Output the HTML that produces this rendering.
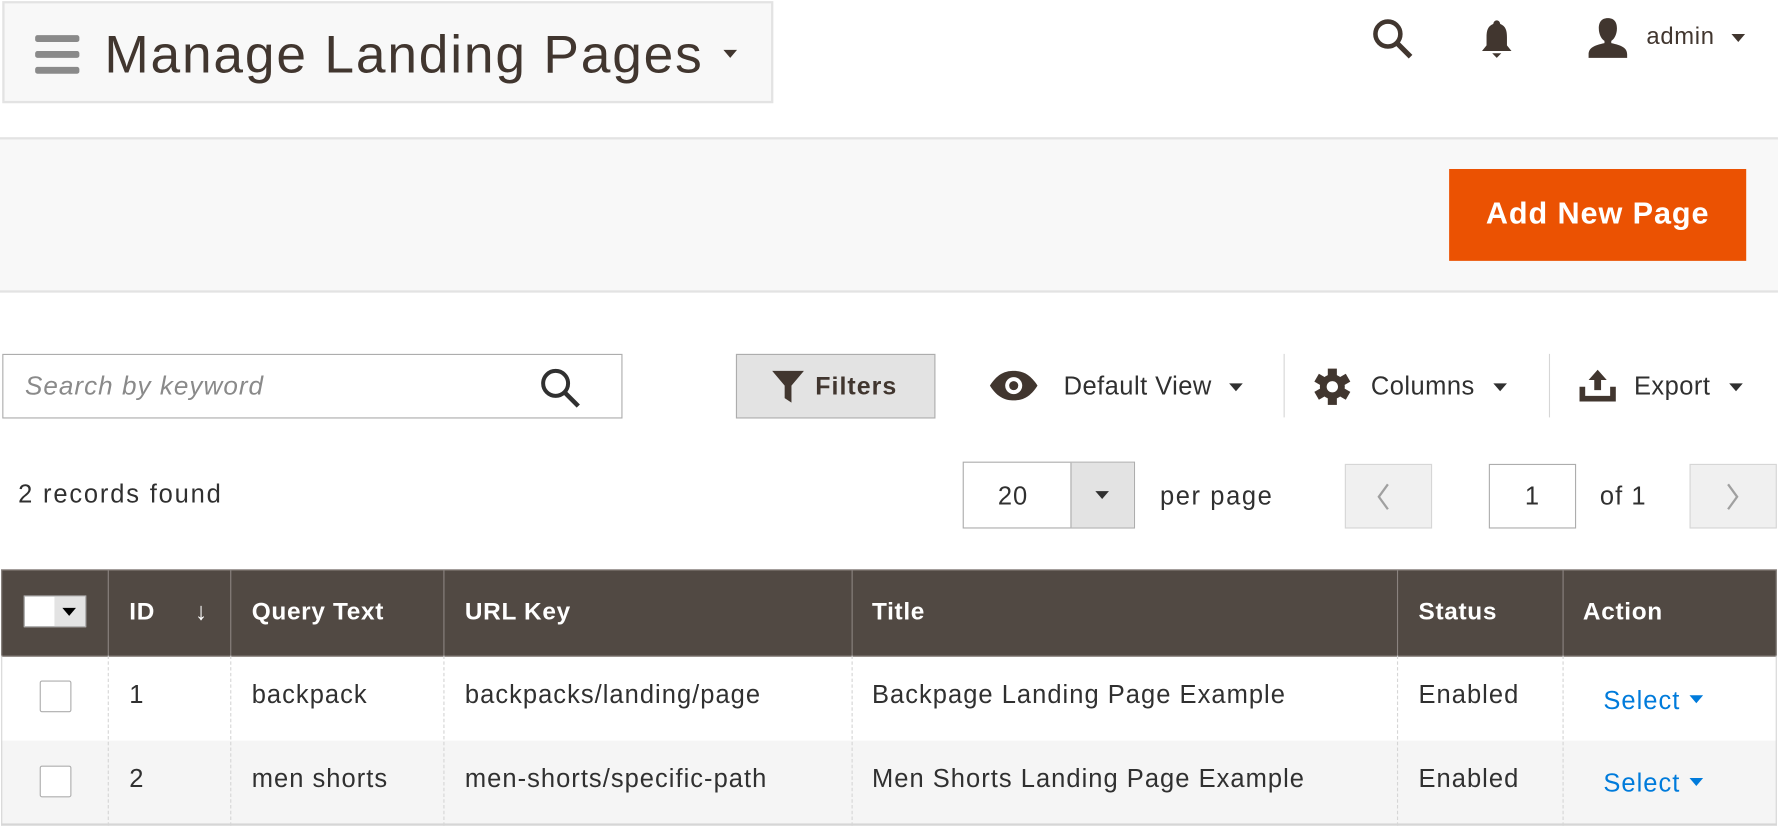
<!DOCTYPE html>
<html><head><meta charset="utf-8"><style>
*{margin:0;padding:0;box-sizing:border-box}
html,body{width:1778px;height:828px;overflow:hidden;background:#fff}
#w{position:absolute;left:0;top:0;width:1568px;height:730px;transform:scale(1.1339,1.1342);transform-origin:0 0;font-family:"Liberation Sans",sans-serif;color:#303030}
.a{position:absolute}
.t{position:absolute;white-space:nowrap;font-size:22.5px;line-height:1;letter-spacing:0.9px}
.tri{position:absolute;width:0;height:0;border-left:6px solid transparent;border-right:6px solid transparent;border-top:7px solid #303030}
.th{position:absolute;top:527px;color:#fff;font-weight:bold;font-size:21.5px;white-space:nowrap;letter-spacing:0.6px}
.vl{position:absolute;top:578px;height:150px;border-left:1px dashed #d6d6d6}
.cb{position:absolute;left:35px;width:28px;height:28px;border:1px solid #adadad;background:#fff;border-radius:2px}
</style></head><body><div id="w">
<div class="a" style="left:2px;top:1px;width:680px;height:90px;background:#f8f8f8;border:2px solid #e3e3e3"></div>
<div class="a" style="left:31px;top:31px;width:39px;height:6px;background:#8a8a8a;border-radius:2px"></div>
<div class="a" style="left:31px;top:45px;width:39px;height:6px;background:#8a8a8a;border-radius:2px"></div>
<div class="a" style="left:31px;top:59px;width:39px;height:6px;background:#8a8a8a;border-radius:2px"></div>
<div class="t" style="left:92px;top:24px;font-size:47px;color:#41362f;letter-spacing:1.6px">Manage Landing Pages</div>
<div class="tri" style="left:638px;top:44px;border-top-color:#41362f"></div>
<svg class="a" style="left:1208px;top:14px" width="40" height="40" viewBox="0 0 40 40"><circle cx="16" cy="16" r="11" fill="none" stroke="#41362f" stroke-width="4"/><line x1="24" y1="24" x2="36" y2="36" stroke="#41362f" stroke-width="4.5"/></svg>
<svg class="a" style="left:1304px;top:16px" width="32" height="38" viewBox="0 0 32 38"><path d="M16 2c2 0 3 2 3 3 5 2 6 6 6 12v7l4 5H3l4-5v-7c0-6 1-10 6-12 0-1 1-3 3-3z" fill="#41362f"/><path d="M12 31h8l-4 4z" fill="#41362f"/></svg>
<svg class="a" style="left:1398px;top:14px" width="40" height="38" viewBox="0 0 40 38"><path d="M20 2c6 0 8 4 8 9 0 6-3 10-5 11v2c9 2 14 4 14 10v3H3v-3c0-6 5-8 14-10v-2c-2-1-5-5-5-11 0-5 2-9 8-9z" fill="#41362f"/></svg>
<div class="t" style="left:1452px;top:22px;font-size:21px;color:#41362f;letter-spacing:0.6px">admin</div>
<div class="tri" style="left:1527px;top:30px;border-top-color:#41362f"></div>
<div class="a" style="left:0;top:121px;width:1568px;height:137px;background:#f8f8f8;border-top:2px solid #e3e3e3;border-bottom:2px solid #e3e3e3"></div>
<div class="a" style="left:1278px;top:149px;width:262px;height:81px;background:#eb5202"></div>
<div class="t" style="left:1278px;width:262px;text-align:center;top:175px;color:#fff;font-weight:bold;font-size:27px;letter-spacing:0.8px">Add New Page</div>
<div class="a" style="left:2px;top:312px;width:547px;height:57px;border:1px solid #adadad;background:#fff"></div>
<div class="t" style="left:22px;top:329px;font-style:italic;color:#8a8a8a;font-size:23px">Search by keyword</div>
<svg class="a" style="left:474px;top:322px" width="40" height="40" viewBox="0 0 40 40"><circle cx="16" cy="16" r="11" fill="none" stroke="#303030" stroke-width="3.5"/><line x1="24" y1="24" x2="36" y2="36" stroke="#303030" stroke-width="4"/></svg>
<div class="a" style="left:649px;top:312px;width:176px;height:57px;border:1px solid #adadad;background:#e3e3e3"></div>
<svg class="a" style="left:680px;top:326px" width="30" height="30" viewBox="0 0 30 30"><path d="M1 1h28L18 14v15l-6-4V14z" fill="#41362f"/></svg>
<div class="t" style="left:719px;top:330px;font-weight:bold;font-size:22px;color:#41362f">Filters</div>
<svg class="a" style="left:872px;top:326px" width="44" height="28" viewBox="0 0 44 28"><path d="M1 14C8 3 15 1 22 1s14 2 21 13c-7 11-14 13-21 13S8 25 1 14z" fill="#41362f"/><circle cx="22" cy="14" r="7.5" fill="#fff"/><circle cx="22" cy="14" r="4" fill="#41362f"/></svg>
<div class="t" style="left:938px;top:330px;color:#303030;letter-spacing:0.4px">Default View</div>
<div class="tri" style="left:1084px;top:338px"></div>
<div class="a" style="left:1132px;top:312px;width:1px;height:56px;background:#d6d6d6"></div>
<svg class="a" style="left:1158px;top:324px" width="34" height="34" viewBox="0 0 34 34"><g fill="#41362f"><circle cx="17" cy="17" r="11"/><rect x="13" y="1" width="8" height="32"/><rect x="13" y="1" width="8" height="32" transform="rotate(60 17 17)"/><rect x="13" y="1" width="8" height="32" transform="rotate(-60 17 17)"/></g><circle cx="17" cy="17" r="5" fill="#fff"/></svg>
<div class="t" style="left:1209px;top:330px;letter-spacing:0.4px">Columns</div>
<div class="tri" style="left:1317px;top:338px"></div>
<div class="a" style="left:1366px;top:312px;width:1px;height:56px;background:#d6d6d6"></div>
<svg class="a" style="left:1392px;top:325px" width="34" height="30" viewBox="0 0 34 30"><path d="M17 1l8 9h-5v9h-6v-9H9z" fill="#41362f"/><path d="M1 16h5v8h22v-8h5v13H1z" fill="#41362f"/></svg>
<div class="t" style="left:1441px;top:330px;letter-spacing:0.4px">Export</div>
<div class="tri" style="left:1525px;top:338px"></div>
<div class="t" style="left:16px;top:425px;letter-spacing:1.6px">2 records found</div>
<div class="a" style="left:849px;top:407px;width:152px;height:59px;border:1px solid #adadad;background:#fff"></div>
<div class="a" style="left:944px;top:408px;width:56px;height:57px;background:#e3e3e3;border-left:1px solid #adadad"></div>
<div class="t" style="left:880px;top:427px">20</div>
<div class="tri" style="left:966px;top:433px"></div>
<div class="t" style="left:1023px;top:427px;letter-spacing:1.4px">per page</div>
<div class="a" style="left:1186px;top:409px;width:77px;height:57px;border:1px solid #d6d6d6;background:#f0f0f0"></div>
<svg class="a" style="left:1213px;top:425px" width="14" height="26" viewBox="0 0 14 26"><path d="M11 2L3 13l8 11" fill="none" stroke="#a0a0a0" stroke-width="2"/></svg>
<div class="a" style="left:1313px;top:409px;width:77px;height:57px;border:1px solid #adadad;background:#fff"></div>
<div class="t" style="left:1313px;width:77px;text-align:center;top:427px">1</div>
<div class="t" style="left:1411px;top:427px">of 1</div>
<div class="a" style="left:1490px;top:409px;width:77px;height:57px;border:1px solid #d6d6d6;background:#f0f0f0"></div>
<svg class="a" style="left:1521px;top:425px" width="14" height="26" viewBox="0 0 14 26"><path d="M3 2l8 11-8 11" fill="none" stroke="#a0a0a0" stroke-width="2"/></svg>
<div class="a" style="left:1px;top:502px;width:1566px;height:77px;background:#514943;border:1px solid #8a837f"></div>
<div class="a" style="left:95px;top:503px;width:1px;height:75px;background:#8a837f"></div>
<div class="a" style="left:203px;top:503px;width:1px;height:75px;background:#8a837f"></div>
<div class="a" style="left:391px;top:503px;width:1px;height:75px;background:#8a837f"></div>
<div class="a" style="left:751px;top:503px;width:1px;height:75px;background:#8a837f"></div>
<div class="a" style="left:1232px;top:503px;width:1px;height:75px;background:#8a837f"></div>
<div class="a" style="left:1378px;top:503px;width:1px;height:75px;background:#8a837f"></div>
<div class="a" style="left:21px;top:525px;width:55px;height:28px;background:#fff;border:1px solid #adadad"></div>
<div class="a" style="left:48px;top:526px;width:27px;height:26px;background:#e3e3e3"></div>
<div class="tri" style="left:55px;top:536px;border-top-color:#000"></div>
<div class="th" style="left:114px">ID</div>
<div class="th" style="left:172px;font-weight:normal">↓</div>
<div class="th" style="left:222px">Query Text</div>
<div class="th" style="left:410px">URL Key</div>
<div class="th" style="left:769px">Title</div>
<div class="th" style="left:1251px">Status</div>
<div class="th" style="left:1396px">Action</div>
<div class="a" style="left:1px;top:653px;width:1566px;height:75px;background:#f5f5f5"></div>
<div class="a" style="left:1px;top:726px;width:1566px;height:2px;background:#d6d6d6"></div>
<div class="a" style="left:1px;top:578px;width:1px;height:150px;background:#d6d6d6"></div>
<div class="a" style="left:1566px;top:578px;width:1px;height:150px;background:#d6d6d6"></div>
<div class="vl" style="left:95px"></div><div class="vl" style="left:203px"></div><div class="vl" style="left:391px"></div><div class="vl" style="left:751px"></div><div class="vl" style="left:1232px"></div><div class="vl" style="left:1378px"></div>
<div class="cb" style="top:600px"></div>
<div class="cb" style="top:675px"></div>
<div class="t" style="left:114px;top:602px">1</div>
<div class="t" style="left:222px;top:602px">backpack</div>
<div class="t" style="left:410px;top:602px">backpacks/landing/page</div>
<div class="t" style="left:769px;top:602px">Backpage Landing Page Example</div>
<div class="t" style="left:1251px;top:602px">Enabled</div>
<div class="t" style="left:1414px;top:607px;color:#007bdb">Select</div>
<div class="tri" style="left:1490px;top:613px;border-top-color:#007bdb"></div>
<div class="t" style="left:114px;top:676px">2</div>
<div class="t" style="left:222px;top:676px">men shorts</div>
<div class="t" style="left:410px;top:676px">men-shorts/specific-path</div>
<div class="t" style="left:769px;top:676px">Men Shorts Landing Page Example</div>
<div class="t" style="left:1251px;top:676px">Enabled</div>
<div class="t" style="left:1414px;top:680px;color:#007bdb">Select</div>
<div class="tri" style="left:1490px;top:686px;border-top-color:#007bdb"></div>
</div></body></html>
